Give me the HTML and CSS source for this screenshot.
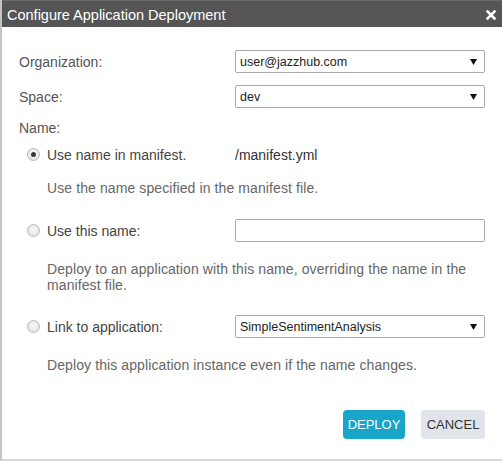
FILE: index.html
```html
<!DOCTYPE html>
<html>
<head>
<meta charset="utf-8">
<link rel="stylesheet" href="styles.css">
</head>
<body>
<div class="dialog">
  <div class="titlebar">
    <span class="title">Configure Application Deployment</span>
    <svg class="close" width="10" height="10" viewBox="0 0 10 10"><path d="M1.5 1.5 L8.5 8.5 M8.5 1.5 L1.5 8.5" stroke="#fff" stroke-width="2.6" stroke-linecap="square"/></svg>
  </div>
  <div class="content">
    <div class="row r-org">
      <span class="label">Organization:</span>
      <div class="select"><span>user@jazzhub.com</span><svg width="7" height="6" viewBox="0 0 7 6"><path d="M0 0 H7 L3.5 6 Z" fill="#111"/></svg></div>
    </div>
    <div class="row r-space">
      <span class="label">Space:</span>
      <div class="select"><span>dev</span><svg width="7" height="6" viewBox="0 0 7 6"><path d="M0 0 H7 L3.5 6 Z" fill="#111"/></svg></div>
    </div>
    <div class="name-label">Name:</div>
    <div class="row opt opt1">
      <label class="radio-label"><span class="radio checked"></span>Use name in manifest.</label>
      <span class="value">/manifest.yml</span>
    </div>
    <p class="desc d1">Use the name specified in the manifest file.</p>
    <div class="row opt opt2">
      <label class="radio-label"><span class="radio"></span>Use this name:</label>
      <div class="textbox"></div>
    </div>
    <p class="desc d2">Deploy to an application with this name, overriding the name in the manifest file.</p>
    <div class="row opt opt3">
      <label class="radio-label"><span class="radio"></span>Link to application:</label>
      <div class="select"><span>SimpleSentimentAnalysis</span><svg width="7" height="6" viewBox="0 0 7 6"><path d="M0 0 H7 L3.5 6 Z" fill="#111"/></svg></div>
    </div>
    <p class="desc d3">Deploy this application instance even if the name changes.</p>
    <div class="buttons">
      <button class="btn primary">DEPLOY</button>
      <button class="btn secondary">CANCEL</button>
    </div>
  </div>
</div>
</body>
</html>
```

FILE: styles.css
```css
html, body {
  margin: 0;
  padding: 0;
  background: #fff;
}
body {
  font-family: "Liberation Sans", Arial, sans-serif;
  font-size: 14px;
  color: #555;
}
.dialog {
  width: 502px;
  height: 461px;
  box-sizing: border-box;
  border-left: 2px solid #c4c4c4;
  border-bottom: 2px solid #d6d6d6;
  display: flex;
  flex-direction: column;
}
.titlebar {
  height: 27px;
  background: #555555;
  border-top: 1px solid #6a6a6a;
  box-sizing: border-box;
  display: flex;
  align-items: center;
  justify-content: space-between;
  padding: 0 6px 0 5px;
}
.title {
  color: #fff;
  font-size: 14.5px;
  margin-top: 1px;
}
.close {
  margin-top: 2px;
}
.content {
  padding: 23px 17px 0 17px;
  display: flex;
  flex-direction: column;
}
.row {
  display: grid;
  grid-template-columns: 216px 250px;
  align-items: center;
  height: 23px;
}
.r-space {
  margin-top: 12px;
}
.label {
  color: #555;
}
.select {
  height: 23px;
  box-sizing: border-box;
  border: 1px solid #a9a9a9;
  border-radius: 2px;
  background: #fff;
  display: flex;
  align-items: center;
  justify-content: space-between;
  padding: 0 7px 0 4px;
  color: #222;
  font-size: 12.5px;
}
.textbox {
  height: 23px;
  box-sizing: border-box;
  border: 1px solid #a9a9a9;
  border-radius: 2px;
  background: #fff;
}
.name-label {
  margin-top: 12px;
  line-height: 16px;
  color: #555;
}
.opt1 {
  margin-top: 7px;
}
.radio-label {
  display: flex;
  align-items: center;
  color: #444;
  padding-left: 8px;
}
.radio {
  width: 13px;
  height: 13px;
  box-sizing: border-box;
  border-radius: 50%;
  border: 1px solid #b8b8b8;
  background: radial-gradient(circle at 50% 40%, #fafafa 0%, #dcdcdc 100%);
  margin-right: 7px;
  position: relative;
  flex: none;
}
.radio.checked::after {
  content: "";
  position: absolute;
  left: 3px;
  top: 3px;
  width: 5px;
  height: 5px;
  border-radius: 50%;
  background: #3a3a3a;
}
.value {
  color: #333;
}
.desc {
  margin: 0;
  padding-left: 28px;
  line-height: 16px;
  color: #666;
  letter-spacing: 0.1px;
}
.d1 {
  margin-top: 14px;
}
.opt2 {
  margin-top: 23px;
}
.d2 {
  margin-top: 19px;
  padding-right: 12px;
}
.opt3 {
  margin-top: 22px;
}
.d3 {
  margin-top: 19px;
}
.buttons {
  margin-top: 37px;
  display: flex;
  justify-content: flex-end;
  gap: 16px;
}
.btn {
  height: 29px;
  border: none;
  border-radius: 4px;
  font-family: "Liberation Sans", Arial, sans-serif;
  font-size: 13px;
  padding: 0;
}
.primary {
  width: 62px;
  background: #17a6c9;
  color: #fff;
}
.secondary {
  width: 64px;
  background: #e1e5e9;
  color: #333;
}
```
